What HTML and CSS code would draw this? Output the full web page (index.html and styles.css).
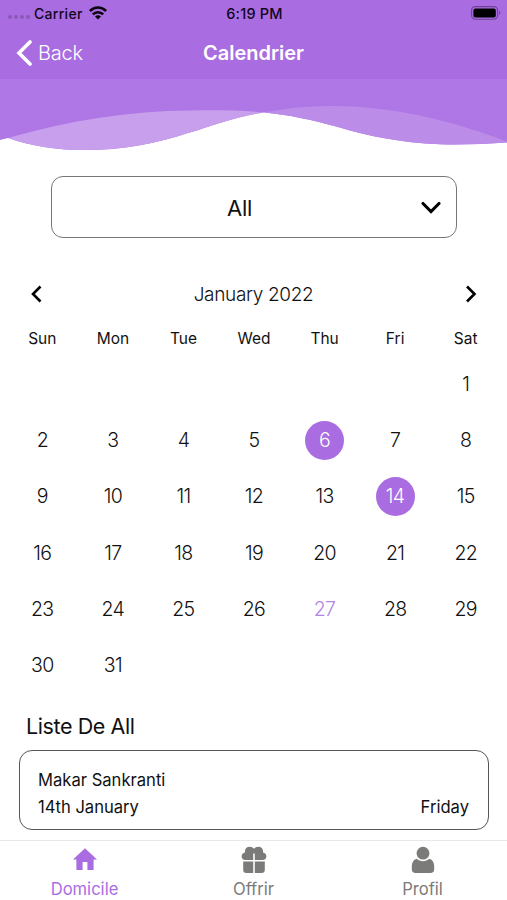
FILE: index.html
```html
<!DOCTYPE html>
<html lang="fr">
<head>
    <meta charset="UTF-8">
    <meta name="viewport" content="width=device-width, initial-scale=1.0">
    <title>Calendrier</title>
    <link rel="stylesheet" href="styles.css">
</head>
<body>
    <div class="status-bar">
        <div class="carrier">
            <span class="signal"><i></i><i></i><i></i><i></i></span>
            <span class="carrier-name">Carrier</span>
            <svg class="wifi" width="18" height="14" viewBox="0 0 18 14">
                <path d="M.9 5C5.400.4 12.600.4 17.100 5" fill="none" stroke="#0b0510" stroke-width="2.600"/>
                <path d="M3.800 8.300C6.600 5.400 11.400 5.400 14.200 8.300" fill="none" stroke="#0b0510" stroke-width="2.500"/>
                <path d="M6 10.400C7.700 8.900 10.300 8.900 12 10.400L9 13.400z" fill="#0b0510"/>
            </svg>
        </div>
        <div class="time">6:19 PM</div>
        <svg class="battery" width="30" height="14" viewBox="0 0 30 14">
            <rect x=".6" y=".6" width="26" height="12.6" rx="3.6" fill="none" stroke="#6d4391" stroke-width="1.1"/>
            <rect x="2.4" y="2.4" width="22.4" height="9" rx="2" fill="#000"/>
            <path d="M28.2 4.8c1.5.6 1.5 3.6 0 4.2z" fill="#6d4391"/>
        </svg>
    </div>

    <div class="navbar">
        <a class="back" href="#">
            <svg width="16" height="26" viewBox="0 0 16 26">
                <path d="M14 2L3 13l11 11" fill="none" stroke="#fff" stroke-width="3.6" stroke-linecap="round"/>
            </svg>
            <span>Back</span>
        </a>
        <h1>Calendrier</h1>
    </div>

    <svg class="wave" width="507" height="74" viewBox="0 0 507 74">
        <path d="M0 0H507V63.500C485 65 462 66 440 65.300C400 63.500 370 57.500 338 48C312 41 288 35.500 264 33.500C238 36.500 215 46 188 54C135 72 65 79 8 59L0 61z" fill="#ae77e5"/>
        <path d="M8 59C70 41 130 32 190 31.500C220 31 244 31.500 264 33.500C238 36.500 215 46 188 54C135 72 65 79 8 59z" fill="#c79fec"/>
        <path d="M264 33.500C340 18 425 31 507 62.500V63.500C485 65 462 66 440 65.300C400 63.500 370 57.500 338 48C312 41 288 35.500 264 33.500z" fill="#bc8ce9"/>
    </svg>

    <div class="select">
        <span>All</span>
        <svg width="20" height="13" viewBox="0 0 20 13">
            <path d="M2 2.500l8 8 8-8" fill="none" stroke="#000" stroke-width="3.100" stroke-linecap="round"/>
        </svg>
    </div>

    <div class="month">
        <svg width="12" height="18" viewBox="0 0 12 18">
            <path d="M10.500 1.500L3 9l7.500 7.500" fill="none" stroke="#000" stroke-width="2.600"/>
        </svg>
        <span>January 2022</span>
        <svg width="12" height="18" viewBox="0 0 12 18">
            <path d="M2 1.500L9.500 9 2 16.500" fill="none" stroke="#000" stroke-width="2.600"/>
        </svg>
    </div>

    <div class="weekdays">
        <span>Sun</span><span>Mon</span><span>Tue</span><span>Wed</span><span>Thu</span><span>Fri</span><span>Sat</span>
    </div>

    <div class="days">
        <span class="first">1</span>
        <span>2</span><span>3</span><span>4</span><span>5</span><span class="marked">6</span><span>7</span><span>8</span>
        <span>9</span><span>10</span><span>11</span><span>12</span><span>13</span><span class="marked">14</span><span>15</span>
        <span>16</span><span>17</span><span>18</span><span>19</span><span>20</span><span>21</span><span>22</span>
        <span>23</span><span>24</span><span>25</span><span>26</span><span class="today">27</span><span>28</span><span>29</span>
        <span>30</span><span>31</span>
    </div>

    <h2>Liste De All</h2>
    <div class="event">
        <div class="event-name">Makar Sankranti</div>
        <div class="event-date">
            <span>14th January</span>
            <span>Friday</span>
        </div>
    </div>

    <div class="tab-bar">
        <a class="tab active" href="#">
            <svg width="28" height="28" viewBox="0 0 28 28">
                <path d="M14 2.200L2 13.400h3.400V24h6.200v-8h4.800v8h6.200V13.400H26z"/>
            </svg>
            <span>Domicile</span>
        </a>
        <a class="tab" href="#">
            <svg width="28" height="28" viewBox="0 0 28 28">
                <path d="M5 6.600C4.400 3.200 6.600.8 9.600.8c2 0 3.400.7 4.400 2 1-1.300 2.400-2 4.400-2 3 0 5.200 2.400 4.600 5.800 2 .4 3.400 1.800 3.400 3.700 0 2.100-1.500 3.700-3.700 3.700h-7.900V7.600h-1.600V14H5.300c-2.200 0-3.700-1.600-3.700-3.700C1.600 8.400 3 7 5 6.600z"/>
                <path d="M3.200 15.400h10V27H6.400a3.200 3.200 0 0 1-3.200-3.200zM14.800 15.400h10v8.400a3.200 3.200 0 0 1-3.200 3.200h-6.800z"/>
            </svg>
            <span>Offrir</span>
        </a>
        <a class="tab" href="#">
            <svg width="28" height="28" viewBox="0 0 28 28">
                <circle cx="14" cy="7.200" r="6.400"/>
                <path d="M7.600 12.800c3.600 3.200 9.200 3.200 12.800 0 3.200 1 4.800 4 4.800 7.800v2.600c0 2.500-1.400 3.800-3.800 3.800H6.600c-2.400 0-3.800-1.300-3.800-3.800v-2.600c0-3.800 1.600-6.800 4.800-7.800z"/>
            </svg>
            <span>Profil</span>
        </a>
    </div>
</body>
</html>
```
FILE: styles.css
```css
* {
    box-sizing: border-box;
}
body {
    font-family: Inter, "Liberation Sans", sans-serif;
    background-color: #fff;
    color: #111;
    margin: 0;
    height: 900px;
    display: flex;
    flex-direction: column;
    overflow: hidden;
}
svg {
    display: block;
    flex-shrink: 0;
}
.status-bar {
    display: grid;
    grid-template-columns: 1fr auto 1fr;
    align-items: center;
    height: 26px;
    padding: 0 6px 0 8px;
    background-color: #a96de1;
    color: #12071c;
    font-size: 14px;
    font-weight: 500;
}
.carrier {
    display: flex;
    align-items: center;
}
.carrier-name {
    letter-spacing: 0.3px;
}
.time {
    font-size: 14.5px;
    letter-spacing: 0.2px;
}
.signal {
    display: flex;
    gap: 2px;
    width: 26px;
    padding-top: 8px;
}
.signal i {
    width: 4px;
    height: 4px;
    border-radius: 50%;
    background-color: #8a58b9;
}
.wifi {
    margin-left: 6px;
}
.battery {
    justify-self: end;
}
.navbar {
    display: grid;
    grid-template-columns: 1fr auto 1fr;
    align-items: center;
    height: 53px;
    padding: 0 16px;
    background-color: #a96de1;
    color: #fff;
}
.back {
    display: flex;
    align-items: center;
    gap: 6px;
    color: #fff;
    font-size: 20px;
    font-weight: 300;
    letter-spacing: -0.2px;
    text-decoration: none;
}
h1 {
    margin: 0;
    font-size: 20px;
    font-weight: 600;
}
.select {
    display: flex;
    align-items: center;
    height: 62px;
    margin: 23px 50px 0 51px;
    padding: 0 15px 0 0;
    border: 1px solid #777;
    border-radius: 12px;
    font-size: 22px;
    letter-spacing: -0.3px;
}
.select span {
    flex: 1;
    padding: 1px 0 0 6px;
    text-align: center;
}
.month {
    display: flex;
    align-items: center;
    justify-content: space-between;
    height: 30px;
    margin-top: 41px;
    padding: 0 30px;
    font-size: 19px;
    font-weight: 300;
    letter-spacing: -0.35px;
}
.weekdays,
.days {
    display: grid;
    grid-template-columns: repeat(7, 1fr);
    padding: 0 6px 0 7px;
    text-align: center;
}
.weekdays {
    margin-top: 20px;
    font-size: 15.5px;
    line-height: 20px;
}
.days {
    grid-auto-rows: 56.2px;
    align-items: center;
    justify-items: center;
    margin-top: 7.5px;
    font-size: 19.5px;
    font-weight: 300;
    letter-spacing: -0.7px;
}
.days span {
    width: 39px;
    line-height: 39px;
    border-radius: 50%;
}
.days .first {
    grid-column: 7;
}
.days .marked {
    background-color: #a96de1;
    color: #fff;
}
.days .today {
    color: #b184e6;
}
h2 {
    margin: 19.5px 0 0 26px;
    font-size: 21.5px;
    font-weight: 400;
    letter-spacing: -0.4px;
    line-height: 26px;
}
.event {
    height: 80px;
    margin: 11px 18px 0 19px;
    padding: 16px 19px 16px 18px;
    border: 1px solid #555;
    border-radius: 13px;
    font-size: 16.6px;
    line-height: 27px;
}
.event-date {
    display: flex;
    justify-content: space-between;
}
.tab-bar {
    display: flex;
    height: 60px;
    margin-top: auto;
    border-top: 1px solid #e8e8e8;
}
.tab {
    flex: 1;
    display: flex;
    flex-direction: column;
    align-items: center;
    gap: 5px;
    padding-top: 5px;
    color: #7b7b79;
    fill: #7b7b79;
    font-size: 16.6px;
    line-height: 20px;
    text-decoration: none;
}
.active {
    color: #a96de1;
    fill: #a96de1;
}
```
